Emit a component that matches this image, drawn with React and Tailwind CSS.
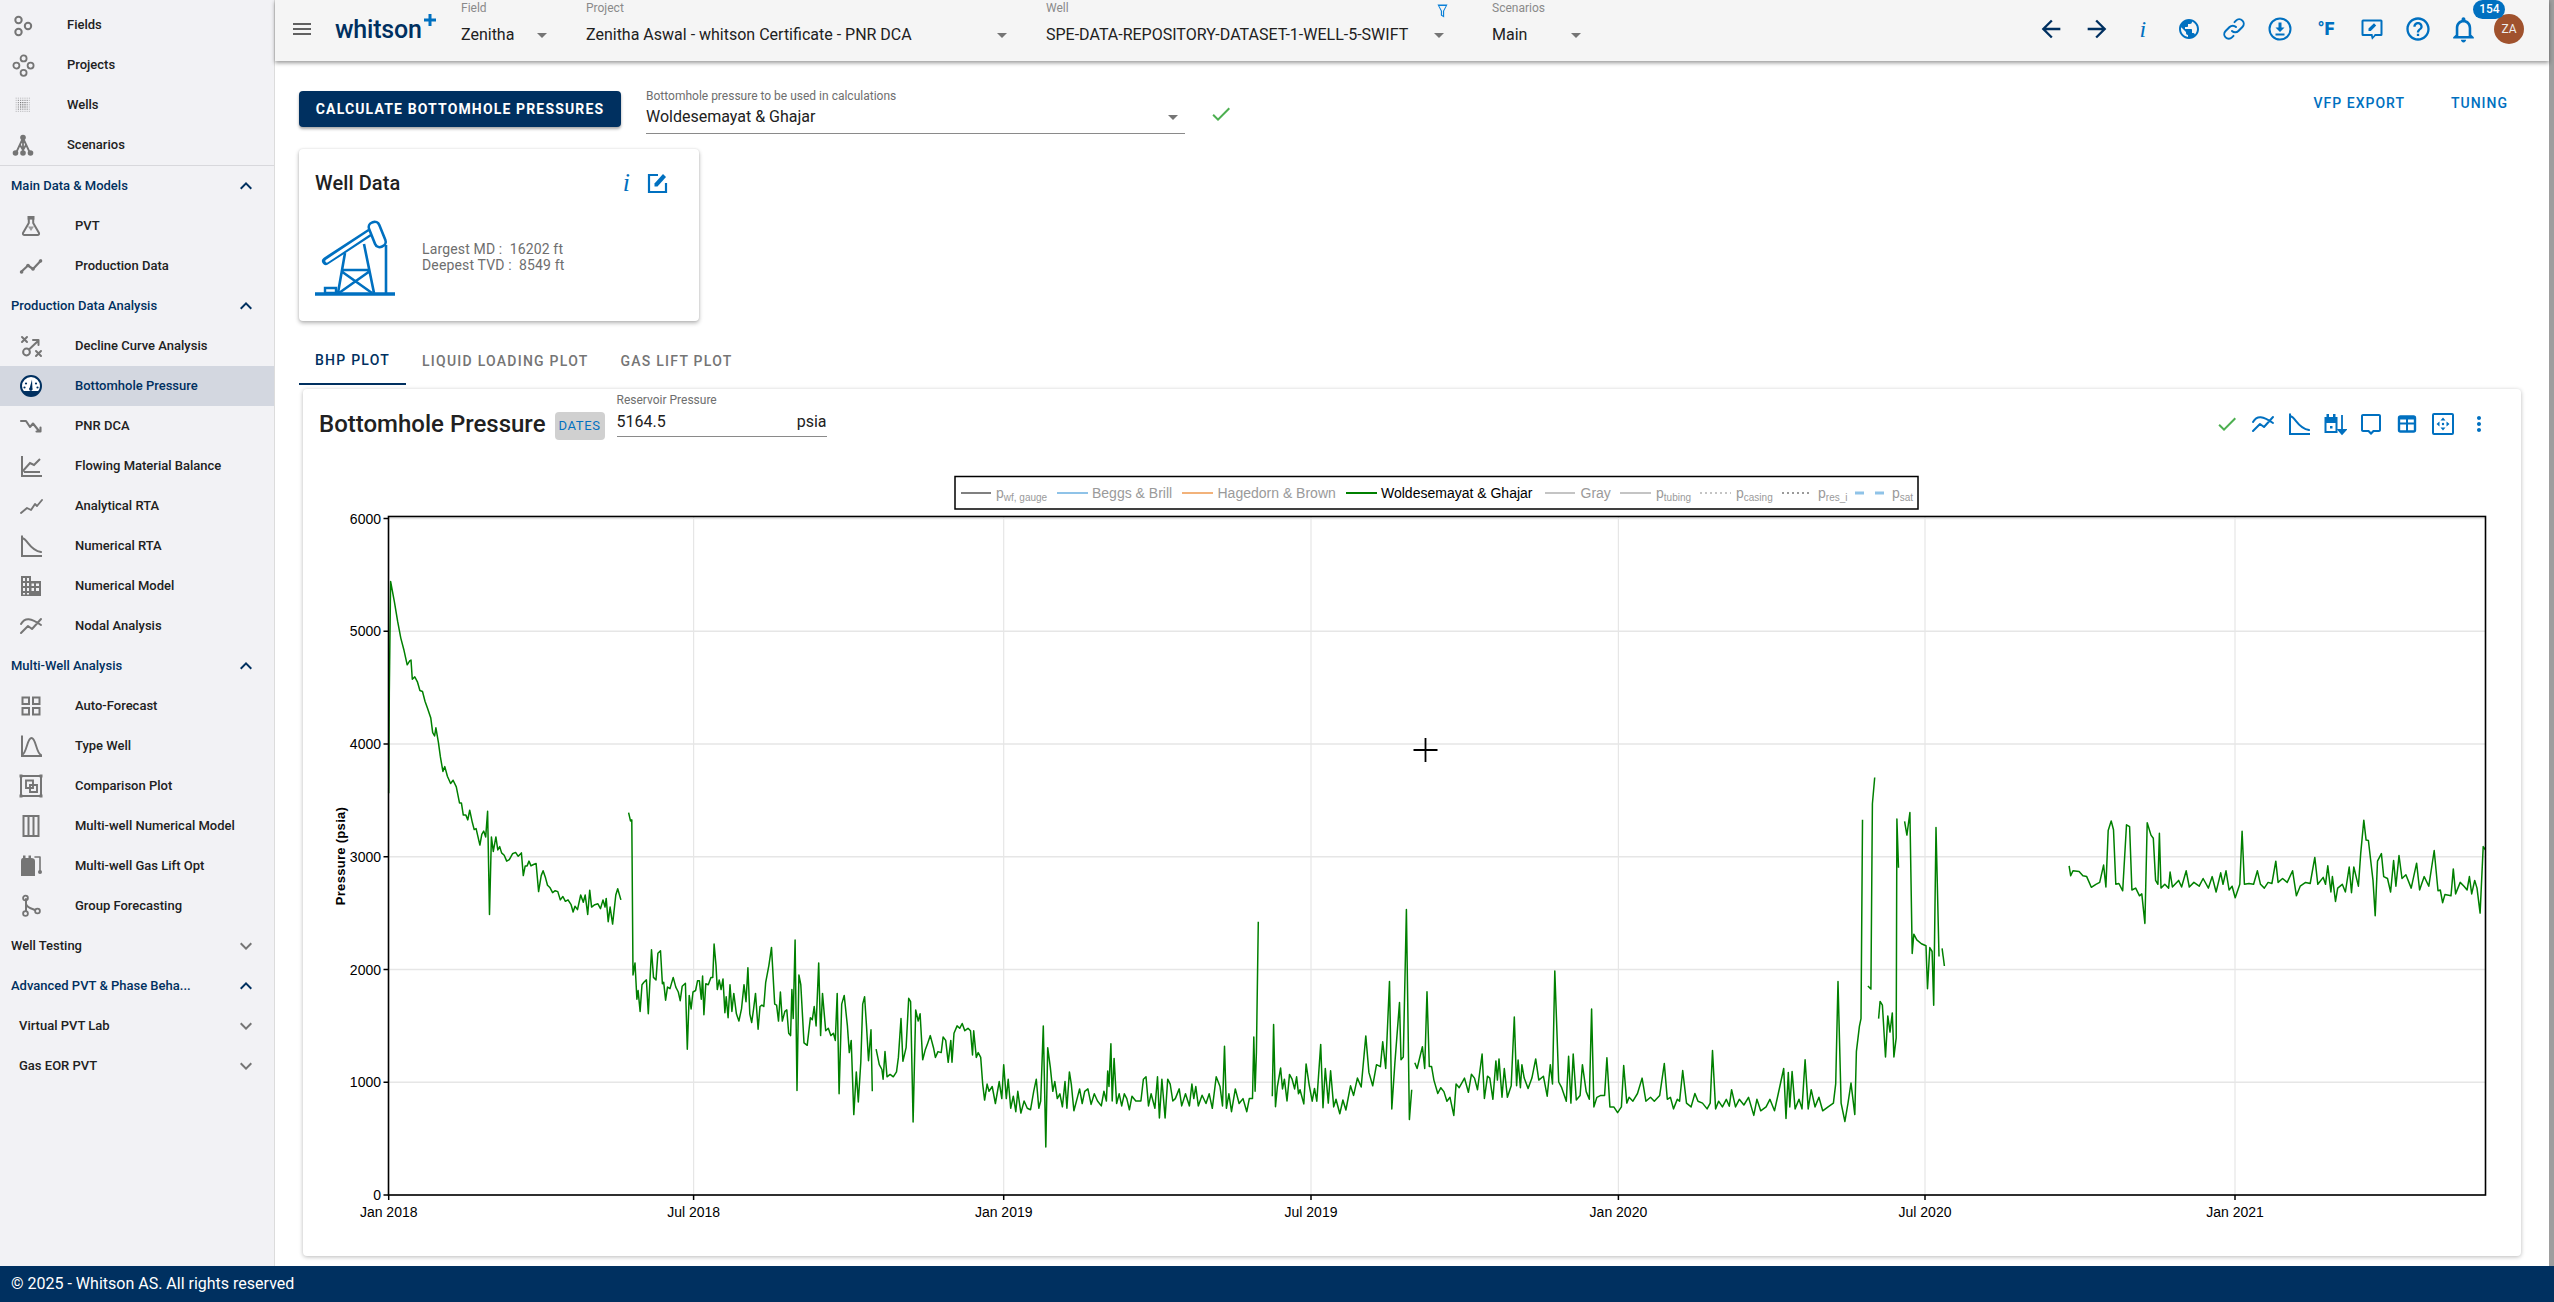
import React from "react";

const Ic = ({ children, size = 24, className = "", vb = "0 0 24 24" }) => (
  <svg viewBox={vb} width={size} height={size} className={"shrink-0 " + className} fill="none" stroke="none">
    {children}
  </svg>
);
const P = ({ d }) => <path d={d} fill="currentColor" />;
const S = ({ d, w = 2 }) => <path d={d} stroke="currentColor" strokeWidth={w} fill="none" strokeLinecap="round" strokeLinejoin="round" />;
const SB = ({ d, w = 2 }) => <path d={d} stroke="currentColor" strokeWidth={w} fill="none" strokeLinecap="butt" strokeLinejoin="miter" />;

const Chevron = ({ up }) =>
  up ? (
    <Ic className="text-[#003060]"><P d="M12 8l-6 6 1.41 1.41L12 10.83l4.59 4.58L18 14z" /></Ic>
  ) : (
    <Ic className="text-[#757575]"><P d="M16.59 8.59L12 13.17 7.41 8.59 6 10l6 6 6-6z" /></Ic>
  );
const Drop = () => (
  <Ic className="text-[#757575]"><P d="M7 10l5 5 5-5z" /></Ic>
);

const wellDots = [];
for (let i = 0; i < 7; i++)
  for (let j = 0; j < 7; j++) {
    const d = Math.max(Math.abs(i - 3), Math.abs(j - 3));
    wellDots.push(<rect key={i + "-" + j} x={4.6 + i * 2.2} y={4.6 + j * 2.2} width="1.2" height="1.2" fill="currentColor" opacity={d < 2 ? 1 : d < 3 ? 0.7 : 0.35} />);
  }

const icons = {
  fields: (
    <>
      <circle cx="7.5" cy="7" r="3.2" stroke="currentColor" strokeWidth="2" />
      <circle cx="17" cy="13" r="3.2" stroke="currentColor" strokeWidth="2" />
      <circle cx="7.5" cy="19" r="3.2" stroke="currentColor" strokeWidth="2" />
    </>
  ),
  projects: (
    <>
      <circle cx="12.6" cy="5.4" r="3" stroke="currentColor" strokeWidth="1.8" />
      <circle cx="5.4" cy="12.6" r="3" stroke="currentColor" strokeWidth="1.8" />
      <circle cx="19.6" cy="12.6" r="3" stroke="currentColor" strokeWidth="1.8" />
      <circle cx="12.6" cy="19.8" r="3" stroke="currentColor" strokeWidth="1.8" />
    </>
  ),
  wells: <>{wellDots}</>,
  scenarios: (
    <>
      <S d="M12 5 L5 20 M12 5 L19 20 M12 5 V20 M9 12 L12 17 L15 12" w={1.8} />
      <circle cx="12" cy="4.5" r="2.8" fill="currentColor" />
      <circle cx="4.5" cy="20" r="2.8" fill="currentColor" />
      <circle cx="12" cy="20" r="2.8" fill="currentColor" />
      <circle cx="19.5" cy="20" r="2.8" fill="currentColor" />
    </>
  ),
  pvt: (
    <>
      <rect x="8.5" y="2" width="7" height="3.6" fill="currentColor" />
      <S d="M9.8 5.5 V9 L4 19 Q3.5 21 5.5 21 H18.5 Q20.5 21 20 19 L14.2 9 V5.5" w={2} />
      <path d="M9 12.5 L15 12.5 L12 17z" fill="currentColor" opacity="0.7" />
    </>
  ),
  prod: (
    <>
      <S d="M2 18 L9 11.5 L14 15 L22 6.5" w={2.2} />
      <circle cx="2.6" cy="18" r="1.8" fill="currentColor" /><circle cx="9" cy="11.5" r="1.8" fill="currentColor" />
      <circle cx="14" cy="15" r="1.8" fill="currentColor" /><circle cx="21.5" cy="7" r="1.8" fill="currentColor" />
    </>
  ),
  dca: (
    <>
      <S d="M3 3 L8 8 M8 3 L3 8 M17 17 L22 22 M22 17 L17 22" w={2} />
      <circle cx="7.5" cy="18" r="3.4" stroke="currentColor" strokeWidth="2" />
      <S d="M10 15.5 L19 7 M14 6 H19.5 V11" w={2} />
    </>
  ),
  bhp: (
    <>
      <circle cx="12" cy="12" r="10" fill="#fff" stroke="#003060" strokeWidth="2" />
      <path d="M3.5 17 H20.5 A10 10 0 0 1 3.5 17z" fill="#003060" />
      <path d="M13 5.5 L10.8 13.5 A1.8 1.8 0 1 0 13.4 14 z" fill="#003060" />
      <circle cx="7" cy="9.5" r="1.1" fill="#003060" /><circle cx="17" cy="9.5" r="1.1" fill="#003060" />
      <circle cx="5.5" cy="13.5" r="1.1" fill="#003060" /><circle cx="18.5" cy="13.5" r="1.1" fill="#003060" />
    </>
  ),
  pnr: <S d="M2 7 L7 7 L11 13 L14 9.5 L20 17 M17.5 17.5 H21.5 V13.5" w={2.1} />,
  fmb: <SB d="M3 2 V22 H23 M3 18 L11 9 L15 11 L21 5 M5 18 H21" w={2} />,
  rta: <S d="M2 19 L8 14 L12 16 L16 10 L18 12 L23 6" w={1.9} />,
  nrta: (
    <>
      <SB d="M3 1.5 V22 H23" w={2} />
      <S d="M3 4 C9 5 10 16 22 18" w={2} />
    </>
  ),
  nmodel: <P d="M2 2 H12 V7 H22 V22 H2z M4 4 V7 H6 V4z M8 4 V7 H10 V4z M4 9 V12 H6 V9z M8 9 V12 H10 V9z M12.5 9.5 V12 H15 V9.5z M17 9.5 V12 H20 V9.5z M4 14 V17 H6 V14z M8 14 V17 H10 V14z M12.5 14 V17 H15 V14z M17 14 V17 H20 V14z M4 19 V20.5 H6 V19z M8 19 V20.5 H10 V19z" />,
  nodal: <S d="M2 10 C6 3 12 4 22 11 M2 19 L9 12 L13 15 L22 5" w={2} />,
  auto: <SB d="M3.5 3.5 H10 V10 H3.5z M14 3.5 H20.5 V10 H14z M3.5 14 H10 V20.5 H3.5z M14 14 H20.5 V20.5 H14z" w={2} />,
  type: (
    <>
      <SB d="M3 1.5 V22 H23" w={2} />
      <S d="M3 21 C8 19 8 4 12.5 4 C17 4 17 19 22 21" w={1.9} />
    </>
  ),
  comp: (
    <>
      <SB d="M2 2 H22 V22 H2z" w={2} />
      <rect x="0.5" y="0.5" width="3" height="3" fill="currentColor" /><rect x="20.5" y="0.5" width="3" height="3" fill="currentColor" />
      <rect x="0.5" y="20.5" width="3" height="3" fill="currentColor" /><rect x="20.5" y="20.5" width="3" height="3" fill="currentColor" />
      <SB d="M7 6.5 H14 V14 H7z M11 11 H18 V18 H11z" w={1.9} />
    </>
  ),
  mwnm: <SB d="M4.5 2 H19.5 V22 H4.5z M9.5 2 V22 M14.5 2 V22" w={2} />,
  gas: (
    <>
      <path d="M2 7 Q2 4 4 4 V1.5 H6.5 V4 H9.5 V1.5 H12 V4 Q16 4 16 7 V22 H2z" fill="currentColor" />
      <S d="M16 3 H21 V17" w={1.6} />
      <circle cx="21" cy="18" r="2" fill="currentColor" />
    </>
  ),
  group: (
    <>
      <S d="M7 5 V17 M7 10 C8 14 14 15 16 16" w={2} />
      <circle cx="6.5" cy="4" r="2.4" stroke="currentColor" strokeWidth="1.8" />
      <circle cx="6.5" cy="19.5" r="2.4" stroke="currentColor" strokeWidth="1.8" />
      <circle cx="18.5" cy="17" r="2.4" stroke="currentColor" strokeWidth="1.8" />
    </>
  ),
};

function NavItem({ icon, label, top, active }) {
  return (
    <div className={"h-10 flex items-center gap-8 " + (top ? "pl-[11px] " : "pl-[19px] ") + (active ? "bg-[#d3d7e0] text-[#003060]" : "text-[#212121]")}>
      <Ic className={active ? "text-[#003060]" : "text-[#757575]"}>{icons[icon]}</Ic>
      <span className="text-[13px] font-medium whitespace-nowrap">{label}</span>
    </div>
  );
}
function NavHead({ label, open, inset }) {
  return (
    <div className={"h-10 flex items-center justify-between pr-4 " + (inset ? "pl-[19px]" : "pl-[11px]")}>
      <span className={"text-[13px] font-medium whitespace-nowrap " + (open ? "text-[#003060]" : "text-[#212121]")}>{label}</span>
      <Chevron up={open} />
    </div>
  );
}

function Sidebar() {
  return (
    <aside className="w-[275px] shrink-0 bg-[#f2f2f5] border-r border-[#dcdcdc]">
      <div className="pt-[5px] border-b border-[#d8d8dc]">
        <NavItem top icon="fields" label="Fields" />
        <NavItem top icon="projects" label="Projects" />
        <NavItem top icon="wells" label="Wells" />
        <NavItem top icon="scenarios" label="Scenarios" />
      </div>
      <NavHead open label="Main Data & Models" />
      <NavItem icon="pvt" label="PVT" />
      <NavItem icon="prod" label="Production Data" />
      <NavHead open label="Production Data Analysis" />
      <NavItem icon="dca" label="Decline Curve Analysis" />
      <NavItem active icon="bhp" label="Bottomhole Pressure" />
      <NavItem icon="pnr" label="PNR DCA" />
      <NavItem icon="fmb" label="Flowing Material Balance" />
      <NavItem icon="rta" label="Analytical RTA" />
      <NavItem icon="nrta" label="Numerical RTA" />
      <NavItem icon="nmodel" label="Numerical Model" />
      <NavItem icon="nodal" label="Nodal Analysis" />
      <NavHead open label="Multi-Well Analysis" />
      <NavItem icon="auto" label="Auto-Forecast" />
      <NavItem icon="type" label="Type Well" />
      <NavItem icon="comp" label="Comparison Plot" />
      <NavItem icon="mwnm" label="Multi-well Numerical Model" />
      <NavItem icon="gas" label="Multi-well Gas Lift Opt" />
      <NavItem icon="group" label="Group Forecasting" />
      <NavHead label="Well Testing" />
      <NavHead open label="Advanced PVT & Phase Beha..." />
      <NavHead inset label="Virtual PVT Lab" />
      <NavHead inset label="Gas EOR PVT" />
    </aside>
  );
}

function TopSelect({ label, value, width, gap, filter }) {
  return (
    <div className={width + " " + gap + " shrink-0 pt-px"}>
      <div className="h-[14px] flex justify-between items-center">
        <span className="text-[12px] leading-[14px] text-[#8a8a8a]">{label}</span>
        {filter && (
          <svg viewBox="0 0 12 15" width="11" height="14" className="mt-[6px] mr-[3px] text-[#0b80d8]">
            <path d="M0.5 0.5 H11.5 L7.8 7.5 V14.5 L4.2 12.5 V7.5z M2.5 2 L5.5 7.6 V11.8 L6.5 12.4 V7.6 L9.5 2z" fill="currentColor" fillRule="evenodd" />
          </svg>
        )}
      </div>
      <div className="mt-2 h-6 flex items-center justify-between">
        <span className="text-[16px] leading-6 text-[#212121] whitespace-nowrap">{value}</span>
        <Drop />
      </div>
    </div>
  );
}

const TopIcon = ({ children, className = "" }) => (
  <div className={"w-[45.8px] h-6 flex items-center justify-center relative shrink-0 " + className}>{children}</div>
);

function TopBar() {
  return (
    <header className="relative z-10 h-[61px] shrink-0 bg-[#f5f5f5] flex items-start shadow-[0_2px_4px_rgba(0,0,0,0.4)]">
      <div className="ml-[15px] mt-[17px] text-[#616161]">
        <Ic><P d="M3 18h18v-2H3v2zm0-5h18v-2H3v2zm0-7v2h18V6H3z" /></Ic>
      </div>
      <div className="ml-[21px] mt-[12px] w-[126px] shrink-0 flex items-start">
        <span className="text-[25px] leading-[36px] font-medium text-[#003060] tracking-[-0.2px]">whitson</span>
        <svg viewBox="0 0 12 12" width="12" height="12" className="mt-[2px] ml-[2px]">
          <path d="M4.5 0 H7.5 V4.5 H12 V7.5 H7.5 V12 H4.5 V7.5 H0 V4.5 H4.5z" fill="#0070c0" />
        </svg>
      </div>
      <TopSelect label="Field" value="Zenitha" width="w-[93px]" gap="mr-[32px]" />
      <TopSelect label="Project" value="Zenitha Aswal - whitson Certificate - PNR DCA" width="w-[428px]" gap="mr-[32px]" />
      <TopSelect label="Well" value="SPE-DATA-REPOSITORY-DATASET-1-WELL-5-SWIFT" width="w-[405px]" gap="mr-[41px]" filter />
      <TopSelect label="Scenarios" value="Main" width="w-[96px]" gap="" />
      <div className="ml-auto mr-[17px] mt-[17px] flex items-center text-[#0070c0]">
        <TopIcon className="text-[#003060]"><Ic size={28}><P d="M20 11H7.83l5.59-5.59L12 4l-8 8 8 8 1.41-1.41L7.83 13H20v-2z" /></Ic></TopIcon>
        <TopIcon className="text-[#003060]"><Ic size={28}><P d="M12 4l-1.41 1.41L16.17 11H4v2h12.17l-5.58 5.59L12 20l8-8z" /></Ic></TopIcon>
        <TopIcon><span className="[font-family:'Liberation_Serif',serif] italic text-[24px] leading-6 font-medium">i</span></TopIcon>
        <TopIcon><Ic><P d="M12 2C6.48 2 2 6.48 2 12s4.48 10 10 10 10-4.48 10-10S17.52 2 12 2zm-1 17.93c-3.95-.49-7-3.85-7-7.93 0-.62.08-1.21.21-1.79L9 15v1c0 1.1.9 2 2 2v1.93zm6.9-2.54c-.26-.81-1-1.39-1.9-1.39h-1v-3c0-.55-.45-1-1-1H8v-2h2c.55 0 1-.45 1-1V7h2c1.1 0 2-.9 2-2v-.41c2.93 1.19 5 4.06 5 7.41 0 2.08-.8 3.97-2.1 5.39z" /></Ic></TopIcon>
        <TopIcon><Ic><S d="M10 14 a4.5 4.5 0 0 0 6.4 0 l4-4 a4.5 4.5 0 0 0 -6.4 -6.4 l-1.5 1.5 M14 10 a4.5 4.5 0 0 0 -6.4 0 l-4 4 a4.5 4.5 0 0 0 6.4 6.4 l1.5 -1.5" w={2} /></Ic></TopIcon>
        <TopIcon>
          <Ic>
            <circle cx="12" cy="12" r="10.5" stroke="currentColor" strokeWidth="2" />
            <path d="M10.5 5.5 H13.5 V10.5 H16.5 L12 15 L7.5 10.5 H10.5z" fill="currentColor" />
            <rect x="7.5" y="16.5" width="9" height="2" fill="currentColor" />
          </Ic>
        </TopIcon>
        <TopIcon><span className="[font-family:Roboto,sans-serif] font-black text-[18px] leading-6">°F</span></TopIcon>
        <TopIcon>
          <Ic>
            <path d="M3 2.5 H21 Q22.5 2.5 22.5 4 V17.5 Q22.5 19 21 19 H15.5 L12 22.8 L11 19 H3 Q1.5 19 1.5 17.5 V4 Q1.5 2.5 3 2.5z M3.5 4.5 V17 H12.5 L13 19.5 L14.8 17 H20.5 V4.5z" fill="currentColor" fillRule="evenodd" />
            <path d="M8.5 14 V11.6 L14 6.2 L16.2 8.4 L10.8 14z" fill="currentColor" />
          </Ic>
        </TopIcon>
        <TopIcon><Ic size={28}><P d="M11 18h2v-2h-2v2zm1-16C6.48 2 2 6.48 2 12s4.48 10 10 10 10-4.48 10-10S17.52 2 12 2zm0 18c-4.41 0-8-3.59-8-8s3.59-8 8-8 8 3.59 8 8-3.59 8-8 8zm0-14c-2.21 0-4 1.79-4 4h2c0-1.1.9-2 2-2s2 .9 2 2c0 2-3 1.75-3 5h2c0-2.25 3-2.5 3-5 0-2.21-1.79-4-4-4z" /></Ic></TopIcon>
        <TopIcon>
          <Ic size={31}><P d="M12 22c1.1 0 2-.9 2-2h-4c0 1.1.9 2 2 2zm6-6v-5c0-3.07-1.63-5.64-4.5-6.32V4c0-.83-.67-1.5-1.5-1.5s-1.5.67-1.5 1.5v.68C7.64 5.36 6 7.92 6 11v5l-2 2v1h16v-1l-2-2zm-2 1H8v-6c0-2.48 1.51-4.5 4-4.5s4 2.02 4 4.5v6z" /></Ic>
          <span className="absolute left-[33px] -top-[17px] w-8 h-[19px] rounded-full bg-[#0070c0] text-white text-[12px] leading-[19px] text-center font-medium z-10">154</span>
        </TopIcon>
        <TopIcon>
          <span className="w-[30px] h-[30px] rounded-full bg-[#a0522d] text-[#eeeeee] text-[12px] leading-[30px] text-center">ZA</span>
        </TopIcon>
      </div>
    </header>
  );
}

function WellData() {
  return (
    <section className="ml-6 mt-[15px] w-[400px] h-[172px] bg-white rounded shadow-[0_2px_4px_rgba(0,0,0,0.3),0_0_2px_rgba(0,0,0,0.1)] pt-5 pl-4 pr-[30px]">
      <div className="flex items-center h-7">
        <span className="text-[20px] leading-7 font-medium text-[#212121] tracking-[0.1px]">Well Data</span>
        <span className="ml-auto mr-[15px] text-[#0070c0] [font-family:'Liberation_Serif',serif] italic font-medium text-[26px] leading-7">i</span>
        <Ic className="text-[#0070c0]">
          <SB d="M13 4 H4 V21 H21 V12" w={2.2} />
          <path d="M9.5 15.5 V12.5 L18 3 L21 6 L12.5 15.5z" fill="currentColor" />
        </Ic>
      </div>
      <div className="mt-[21px] flex items-center">
        <svg viewBox="315 218 80 78" width="80" height="78" className="shrink-0 text-[#0070c0]" fill="none" stroke="currentColor">
          <path d="M315 294 H395" strokeWidth="3.4" />
          <path d="M325 288 H336 V293 H325z" strokeWidth="2.4" />
          <path d="M326 261 L369 233" strokeWidth="8" strokeLinecap="round" />
          <path d="M327 261 L369 233" stroke="#fff" strokeWidth="3.2" strokeLinecap="round" />
          <rect x="-5.5" y="-12.5" width="11" height="26" rx="5" transform="translate(377 234) rotate(-22)" strokeWidth="2.6" fill="#fff" />
          <path d="M386 245 V294" strokeWidth="2.6" />
          <path d="M345 253 L338 293 M364 244 L374 293 M342 270 H369 M341 271 L372 293 M370 271 L339 293" strokeWidth="2.6" />
        </svg>
        <div className="ml-[27px] text-[14px] leading-4 text-[#6e6e6e] whitespace-pre tracking-[0.15px]">
          <div>{"Largest MD :  16202 ft"}</div>
          <div>{"Deepest TVD :  8549 ft"}</div>
        </div>
      </div>
    </section>
  );
}

const m10 = (a) => a.map(([x, y]) => [300 + x * 0.638, 500 + y * 0.4847]);
const m11 = (a) => a.map(([x, y]) => [1300 + x * 0.7653, 700 + y * 0.3839]);

const segments = [
  m10([[139,605],[140,400],[142,168],[148,210],[153,250],[158,285],[163,310],[168,340],[172,332],[174,330],[176,370],[180,365],[184,375],[188,393],[192,395],[196,415],[200,430],[205,450],[208,480],[211,487],[213,470],[217,500],[220,530],[224,560],[227,550],[231,570],[236,585],[240,578],[245,592],[250,625],[253,625],[256,650],[260,650],[263,660],[266,640],[270,665],[273,680],[276,678],[279,695],[282,712],[285,690],[288,683],[291,695],[294,642],[297,855],[300,695],[303,725],[307,695],[310,722],[313,715],[316,728],[320,733],[324,745],[328,742],[333,730],[338,727],[342,735],[347,728],[350,775],[353,755],[356,755],[359,745],[362,755],[366,752],[370,750],[374,808],[378,775],[381,765],[385,780],[388,795],[392,800],[396,810],[400,806],[404,808],[408,825],[412,818],[416,828],[420,825],[425,835],[428,850],[431,838],[435,845],[440,815],[444,830],[447,815],[451,855],[454,805],[457,840],[462,835],[467,833],[471,843],[475,825],[478,840],[480,822],[483,870],[486,840],[490,875],[495,815],[498,802],[503,825]]),
  m10([[515,645],[518,662],[520,660],[522,980],[525,955],[528,1030],[530,1012],[533,1055],[536,1000],[539,995],[543,990],[546,1060],[551,928],[554,985],[558,990],[561,935],[565,930],[568,998],[570,995],[573,1032],[576,1005],[580,1008],[585,985],[589,1005],[593,1015],[596,1033],[599,1003],[604,997],[607,1133],[610,1022],[613,1050],[616,1015],[620,1012],[623,992],[626,992],[629,1030],[631,982],[633,1062],[636,998],[640,1000],[644,985],[647,985],[649,916],[652,960],[654,1010],[657,990],[660,1010],[663,988],[666,1058],[668,1025],[671,1068],[674,1000],[677,1055],[680,1018],[684,1060],[688,1075],[692,1050],[696,1000],[699,1035],[702,965],[705,1060],[708,1078],[711,1050],[714,1018],[718,1092],[721,1045],[724,1042],[727,1045],[730,995],[735,960],[739,923],[744,1040],[747,1042],[750,1075],[753,1015],[756,1075],[760,1055],[763,1052],[766,1100],[769,1105],[771,1010],[773,1070],[776,908],[779,1218],[782,980],[785,1000],[790,1120],[795,1125],[800,1068],[803,1072],[806,1045],[809,1085],[813,955],[816,1105],[819,1018],[824,1095],[828,1090],[832,1105],[836,1100],[839,1115],[842,1018],[845,1225],[849,1040],[853,1022],[858,1085],[861,1140],[864,1115],[868,1268],[872,1180],[875,1242],[879,1160],[882,1040],[885,1025],[888,1085],[891,1157],[895,1093],[897,1220]]),
  m10([[903,1133],[908,1165],[912,1175],[914,1195],[917,1138],[920,1190],[925,1185],[930,1190],[935,1180],[938,1150],[942,1070],[945,1158],[950,1130],[954,1028],[957,1035],[961,1283],[965,1052],[969,1075],[972,1060],[976,1155],[980,1135],[984,1120],[988,1105],[993,1130],[996,1150],[1000,1138],[1005,1140],[1008,1108],[1012,1115],[1016,1160],[1020,1115],[1022,1160],[1025,1100],[1030,1085],[1034,1090],[1038,1080],[1042,1095],[1047,1090],[1051,1095],[1054,1145],[1056,1095],[1060,1150],[1063,1140],[1067,1150],[1070,1205],[1073,1238],[1077,1205],[1080,1220],[1085,1210],[1090,1245],[1096,1200],[1100,1235],[1103,1165],[1107,1235],[1110,1195],[1114,1255],[1118,1230],[1122,1262],[1125,1220],[1130,1265],[1135,1240],[1140,1255],[1145,1258],[1150,1220],[1154,1195],[1158,1255],[1161,1240],[1165,1085],[1169,1335],[1172,1130],[1176,1170],[1180,1220],[1183,1200],[1187,1235],[1191,1225],[1195,1252],[1199,1200],[1202,1255],[1206,1180],[1209,1205],[1213,1260],[1218,1235],[1222,1215],[1226,1245],[1230,1220],[1235,1215],[1240,1247],[1245,1225],[1250,1240],[1256,1250],[1260,1220],[1264,1240],[1266,1178],[1268,1210],[1271,1122],[1273,1240],[1276,1152],[1280,1245],[1284,1225],[1288,1250],[1292,1225],[1296,1235],[1300,1258],[1304,1230],[1310,1240],[1318,1240],[1322,1195],[1326,1190],[1330,1250],[1334,1225],[1340,1255],[1344,1190],[1347,1275],[1351,1195],[1356,1275],[1360,1195],[1364,1205],[1368,1240],[1372,1235],[1378,1215],[1382,1250],[1388,1225],[1394,1250],[1398,1205],[1401,1235],[1404,1210],[1408,1250],[1414,1228],[1420,1245],[1425,1225],[1430,1255],[1436,1190],[1442,1210],[1446,1250],[1449,1127],[1452,1255],[1456,1225],[1460,1262],[1466,1215],[1472,1245],[1478,1235],[1484,1262],[1488,1235],[1493,1235],[1495,1108],[1497,1220],[1499,1140],[1502,870]]),
  [...m10([[1524,1230],[1526,1082],[1529,1252],[1532,1210],[1537,1172],[1540,1215],[1543,1195],[1547,1240],[1551,1185],[1555,1195],[1559,1215],[1562,1190],[1565,1225]]),
   ...m11([[0,1015],[5,1052],[8,948],[12,1003],[16,1045],[19,1012],[22,1045],[27,897],[30,1062],[33,960],[37,1050],[40,966],[44,1060],[47,1040],[52,1078],[56,1042],[60,1068],[66,1005],[70,1030],[75,985],[80,1008],[86,875],[90,970],[95,1005],[100,950],[105,955],[108,890],[112,960],[117,733],[120,1065],[124,945],[130,788],[132,937],[135,930],[139,546],[143,1093],[146,1015]])],
  m11([[150,945],[153,960],[160,903],[163,960],[166,760],[169,955],[172,955],[175,990],[180,1025],[184,1010],[188,1020],[192,1045],[196,1035],[201,1082],[204,1000],[208,1010],[215,985],[220,1022],[224,975],[228,985],[232,1015],[238,922],[241,1038],[245,980],[248,985],[252,1040],[256,940],[258,990],[260,935],[264,1035],[267,960],[271,1035],[276,1005],[280,826],[283,1005],[285,938],[288,1010],[290,950],[293,985],[298,1012],[303,985],[308,935],[312,990],[318,980],[323,1032],[327,950],[330,1000],[333,706],[338,995],[342,1010],[348,1045],[351,928],[354,1050],[357,922],[361,1042],[366,1030],[369,950],[374,1020],[378,1040],[381,805],[384,1060],[388,1035],[393,1030],[398,1030],[401,932],[405,1060],[410,1060],[415,1075],[420,1060],[423,952],[427,1050],[430,1035],[435,1045],[441,1025],[447,985],[452,1045],[458,1035],[463,1045],[470,1030],[476,947],[480,1040],[484,1035],[488,1065],[493,1040],[496,1045],[500,965],[505,1050],[511,1060],[516,1025],[520,1045],[526,1050],[532,1065],[536,1050],[539,913],[543,1065],[547,1045],[552,1060],[557,1040],[561,1058],[564,1015],[569,1060],[574,1040],[580,1055],[586,1035],[593,1082],[597,1040],[602,1070],[609,1060],[614,1040],[620,1070],[625,1025],[632,960],[635,1090],[638,970],[640,1060],[643,968],[647,1065],[652,1040],[656,1065],[660,937],[664,1065],[668,1015],[673,1060],[678,1035],[683,1070],[690,1060],[697,1050],[700,1000],[703,733],[707,1050],[712,1098],[716,1050],[720,998],[725,1080],[727,915],[731,850],[733,830],[735,312]]),
  m11([[742,745],[746,753],[748,270],[751,202]]),
  m11([[756,830],[758,785],[761,795],[765,930],[768,823],[771,865],[774,815],[776,930],[779,880],[780,310],[782,437]]),
  m11([[790,316],[793,352],[797,293],[800,660],[802,610],[806,625],[812,635],[818,640],[820,752],[823,645],[826,655],[828,795],[831,332],[835,668]]),
  m11([[839,647],[842,693]]),
  m11([[1005,432],[1007,458],[1010,445],[1018,447],[1023,458],[1028,460],[1034,488],[1040,480],[1045,475],[1050,430],[1053,487],[1056,340],[1060,315],[1063,338],[1066,480],[1070,478],[1075,497],[1080,325],[1084,330],[1087,495],[1092,490],[1097,510],[1100,505],[1104,582],[1107,320],[1112,352],[1115,360],[1118,470],[1121,480],[1123,347],[1125,490],[1130,480],[1135,490],[1137,448],[1140,487],[1148,470],[1152,487],[1158,445],[1162,487],[1168,475],[1175,485],[1180,465],[1187,490],[1192,460],[1197,500],[1203,450],[1206,480],[1210,445],[1214,495],[1218,485],[1222,515],[1228,480],[1231,342],[1234,480],[1240,478],[1246,480],[1251,445],[1255,480],[1260,490],[1265,475],[1270,478],[1275,420],[1278,475],[1284,465],[1290,475],[1297,445],[1302,510],[1307,485],[1314,475],[1320,478],[1326,410],[1330,480],[1337,462],[1340,480],[1343,432],[1347,500],[1349,460],[1353,525],[1356,490],[1362,480],[1366,500],[1371,435],[1374,502],[1377,435],[1383,485],[1386,400],[1390,313],[1393,365],[1396,366],[1402,470],[1405,562],[1408,420],[1413,400],[1416,460],[1421,465],[1425,500],[1429,418],[1432,485],[1436,405],[1440,465],[1445,455],[1452,490],[1459,425],[1463,495],[1469,460],[1475,485],[1482,392],[1487,497],[1490,495],[1493,528],[1496,507],[1504,510],[1507,440],[1510,505],[1516,475],[1521,485],[1525,495],[1528,460],[1531,505],[1535,470],[1538,490],[1542,555],[1546,382],[1549,390]]),
];

const L = 388.5, R = 2485.5, T = 516.5, B = 1195;
const yOf = (v) => 1195 - (v * 676.5) / 6000;
const xTicks = [[388.7, "Jan 2018"], [693.6, "Jul 2018"], [1003.7, "Jan 2019"], [1311, "Jul 2019"], [1618.4, "Jan 2020"], [1925, "Jul 2020"], [2235, "Jan 2021"]];
const yTicks = [0, 1000, 2000, 3000, 4000, 5000, 6000];

const LegendText = ({ x, main, sub, fill = "#9a9a9a" }) => (
  <text x={x} y={498} fontSize="14" fill={fill}>
    {main}
    {sub && <tspan dy="3" fontSize="10">{sub}</tspan>}
  </text>
);
const LegendLine = ({ x1, x2, stroke, dash, w = 2 }) => (
  <line x1={x1} x2={x2} y1={493} y2={493} stroke={stroke} strokeWidth={w} strokeDasharray={dash} />
);

function Chart() {
  return (
    <svg viewBox="303 466 2218 790" width="2218" height="790" className="block [font-family:'Liberation_Sans',Arial,sans-serif]">
      {yTicks.map((v) => (
        <line key={v} x1={L} x2={R} y1={yOf(v)} y2={yOf(v)} stroke="#e6e6e6" strokeWidth="1.5" />
      ))}
      {xTicks.map(([x, t]) => (
        <line key={t} x1={x} x2={x} y1={T} y2={B} stroke="#e6e6e6" strokeWidth="1.2" />
      ))}
      {segments.map((s, i) => (
        <polyline key={i} points={s.map((p) => p[0].toFixed(1) + "," + p[1].toFixed(1)).join(" ")} fill="none" stroke="#008000" strokeWidth="1.5" strokeLinejoin="round" />
      ))}
      <rect x={L} y={T} width={R - L} height={B - T} fill="none" stroke="#000" strokeWidth="1.6" />
      {yTicks.map((v) => (
        <g key={v}>
          <line x1={L - 5} x2={L} y1={yOf(v)} y2={yOf(v)} stroke="#000" strokeWidth="1.5" />
          <text x={381} y={yOf(v) + 5} fontSize="14" textAnchor="end" fill="#000">{v}</text>
        </g>
      ))}
      {xTicks.map(([x, t]) => (
        <g key={t}>
          <line x1={x} x2={x} y1={B} y2={B + 5} stroke="#000" strokeWidth="1.5" />
          <text x={x} y={1217} fontSize="14" textAnchor="middle" fill="#000">{t}</text>
        </g>
      ))}
      <text transform="translate(345 856) rotate(-90)" textAnchor="middle" fontSize="13" fontWeight="700" letterSpacing="0.3" fill="#000">Pressure (psia)</text>

      <rect x="955" y="476.5" width="963" height="32.5" fill="#fff" stroke="#000" strokeWidth="1.5" />
      <LegendLine x1={961} x2={991} stroke="#808080" />
      <LegendText x={996} main="p" sub="wf, gauge" />
      <LegendLine x1={1057} x2={1088} stroke="#8fc3e8" />
      <LegendText x={1092} main="Beggs & Brill" />
      <LegendLine x1={1182} x2={1213} stroke="#f2b27a" />
      <LegendText x={1217.5} main="Hagedorn & Brown" />
      <LegendLine x1={1346} x2={1377} stroke="#008000" />
      <LegendText x={1381} main="Woldesemayat & Ghajar" fill="#000" />
      <LegendLine x1={1545} x2={1575} stroke="#c4c4c4" />
      <LegendText x={1580.5} main="Gray" />
      <LegendLine x1={1620} x2={1651} stroke="#c4c4c4" />
      <LegendText x={1656} main="p" sub="tubing" />
      <LegendLine x1={1700} x2={1731} stroke="#c4c4c4" dash="2 3" />
      <LegendText x={1736} main="p" sub="casing" />
      <LegendLine x1={1782} x2={1811} stroke="#9a9a9a" dash="2 3" />
      <LegendText x={1818} main="p" sub="res_i" />
      <LegendLine x1={1855} x2={1884} stroke="#8fc3e8" dash="9 11" w={3} />
      <LegendText x={1892} main="p" sub="sat" />

      <path d="M1413.5 750 H1437.5 M1425.5 738 V762" stroke="#000" strokeWidth="1.8" fill="none" />
    </svg>
  );
}

const ToolIcon = ({ children }) => <div className="w-9 h-6 flex items-center justify-center shrink-0">{children}</div>;

function PlotCard() {
  return (
    <section className="mt-1 ml-[28px] mr-[28px] mb-[10px] flex-1 min-h-0 bg-white rounded shadow-[0_1px_4px_rgba(0,0,0,0.28)]">
      <div className="h-[77px] flex items-start">
        <h2 className="ml-4 mt-[19px] text-[24px] leading-8 font-medium text-[#212121] whitespace-nowrap">Bottomhole Pressure</h2>
        <div className="ml-[9px] mt-[23px] w-[50px] h-7 rounded bg-[#d0d0d0] text-[#0070c0] text-[13px] leading-7 text-center tracking-[0.6px]">DATES</div>
        <div className="ml-3 mt-1 w-[210px]">
          <div className="text-[12px] leading-[14px] text-[#6e6e6e]">Reservoir Pressure</div>
          <div className="mt-[3px] h-[27px] pb-[3px] flex items-center justify-between border-b border-[#8a8a8a] text-[16px] leading-6 text-[#212121]">
            <span>5164.5</span>
            <span>psia</span>
          </div>
        </div>
        <div className="ml-auto mr-6 mt-[23px] flex items-center text-[#0070c0]">
          <ToolIcon><Ic className="text-[#4caf50]"><P d="M9 16.17L4.83 12l-1.42 1.41L9 19 21 7l-1.41-1.41z" /></Ic></ToolIcon>
          <ToolIcon><Ic>{icons.nodal}</Ic></ToolIcon>
          <ToolIcon><Ic>{icons.nrta}</Ic></ToolIcon>
          <ToolIcon>
            <Ic>
              <path d="M1.5 5 H3.5 V2 H6 V5 H10 V2 H12.5 V5 H14.5 V21 H1.5z M3.5 11 V19 H12.5 V11z" fill="currentColor" fillRule="evenodd" />
              <rect x="7" y="14" width="2.5" height="2.5" fill="currentColor" />
              <path d="M19 3 V19 M15.5 18 H22.5 L19 22z" stroke="currentColor" strokeWidth="1.8" fill="currentColor" />
            </Ic>
          </ToolIcon>
          <ToolIcon><Ic><P d="M20 2H4c-1.1 0-2 .9-2 2v14c0 1.1.9 2 2 2h5l3 3 3-3h5c1.1 0 2-.9 2-2V4c0-1.1-.9-2-2-2zm0 16h-6l-2 2-2-2H4V4h16v14z" /></Ic></ToolIcon>
          <ToolIcon>
            <Ic>
              <rect x="4" y="4.5" width="16" height="15" rx="1.5" stroke="currentColor" strokeWidth="2.4" />
              <path d="M4 11.5 H20 M12 5 V19" stroke="currentColor" strokeWidth="2" />
              <rect x="4" y="4.5" width="16" height="3" fill="currentColor" />
            </Ic>
          </ToolIcon>
          <ToolIcon>
            <Ic>
              <rect x="2" y="2" width="20" height="20" rx="1" stroke="currentColor" strokeWidth="2" />
              <path d="M12 5.5 L14.5 8.5 H9.5z M12 18.5 L9.5 15.5 H14.5z M5.5 12 L8.5 9.5 V14.5z M18.5 12 L15.5 14.5 V9.5z" fill="currentColor" />
              <circle cx="12" cy="12" r="1.2" fill="currentColor" />
            </Ic>
          </ToolIcon>
          <ToolIcon><Ic><P d="M12 8c1.1 0 2-.9 2-2s-.9-2-2-2-2 .9-2 2 .9 2 2 2zm0 2c-1.1 0-2 .9-2 2s.9 2 2 2 2-.9 2-2-.9-2-2-2zm0 6c-1.1 0-2 .9-2 2s.9 2 2 2 2-.9 2-2-.9-2-2-2z" /></Ic></ToolIcon>
        </div>
      </div>
      <Chart />
    </section>
  );
}

function Main() {
  return (
    <div className="flex-1 min-w-0 flex flex-col">
      <TopBar />
      <main className="flex-1 min-h-0 flex flex-col bg-white">
        <div className="mt-[28px] h-[45px] flex items-start pl-6 pr-[41px]">
          <button className="mt-[2px] w-[322px] h-9 rounded bg-[#003060] text-white text-[14px] font-bold tracking-[1.15px] whitespace-nowrap shadow-[0_2px_3px_rgba(0,0,0,0.35)]">
            CALCULATE BOTTOMHOLE PRESSURES
          </button>
          <div className="ml-[25px] w-[539px]">
            <div className="text-[12px] leading-[14px] text-[#6e6e6e]">Bottomhole pressure to be used in calculations</div>
            <div className="mt-[2px] h-[29px] flex items-start justify-between border-b border-[#8a8a8a]">
              <span className="text-[16px] leading-6 text-[#212121]">Woldesemayat & Ghajar</span>
              <Drop />
            </div>
          </div>
          <Ic className="ml-6 mt-[13px] text-[#4caf50]"><P d="M9 16.17L4.83 12l-1.42 1.41L9 19 21 7l-1.41-1.41z" /></Ic>
          <div className="ml-auto mt-[2px] h-6 flex items-center gap-[46px] text-[#0070c0] text-[14px] font-medium tracking-[1px] whitespace-nowrap">
            <span>VFP EXPORT</span>
            <span>TUNING</span>
          </div>
        </div>
        <WellData />
        <div className="mt-4 ml-6 h-12 flex items-stretch text-[14px] font-medium tracking-[1.25px] whitespace-nowrap">
          <div className="w-[107px] px-4 flex items-center border-b-2 border-[#003060] text-[#003060]">BHP PLOT</div>
          <div className="px-4 flex items-center text-[#757575]">LIQUID LOADING PLOT</div>
          <div className="px-4 flex items-center text-[#757575]">GAS LIFT PLOT</div>
        </div>
        <PlotCard />
      </main>
    </div>
  );
}

export default function App() {
  return (
    <div className="w-[2554px] h-[1302px] flex flex-col overflow-hidden bg-white [font-family:Roboto,sans-serif]">
      <div className="flex-1 min-h-0 flex">
        <Sidebar />
        <Main />
        <div className="w-[5px] shrink-0 bg-[#9e9e9e]" />
      </div>
      <footer className="h-9 shrink-0 bg-[#003060] text-white text-[16px] leading-9 pl-[11px]">© 2025 - Whitson AS. All rights reserved</footer>
    </div>
  );
}
